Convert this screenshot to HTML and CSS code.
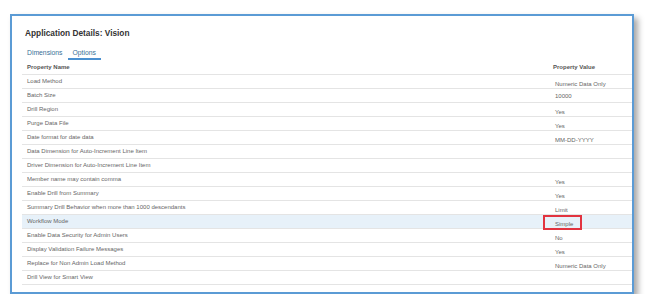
FILE: index.html
```html
<!doctype html>
<html lang="en">
<head>
	<meta charset="UTF-8">
	<title>Application Details: Vision</title>
	<link rel="stylesheet" href="styles.css">
</head>
<body>
	<div class="frame">
		<div class="content">
			<h1 class="title">Application Details: Vision</h1>
			<ul class="tabs">
				<li>Dimensions</li>
				<li class="on">Options</li>
			</ul>
			<div class="grid">
				<div class="row head"><span class="name">Property Name</span><span class="val">Property Value</span></div>
				<div class="row"><span class="name">Load Method</span><span class="val">Numeric Data Only</span></div>
				<div class="row"><span class="name">Batch Size</span><span class="val up">10000</span></div>
				<div class="row"><span class="name">Drill Region</span><span class="val">Yes</span></div>
				<div class="row"><span class="name">Purge Data File</span><span class="val">Yes</span></div>
				<div class="row"><span class="name">Date format for date data</span><span class="val">MM-DD-YYYY</span></div>
				<div class="row"><span class="name">Data Dimension for Auto-Increment Line Item</span><span class="val"></span></div>
				<div class="row"><span class="name">Driver Dimension for Auto-Increment Line Item</span><span class="val"></span></div>
				<div class="row"><span class="name">Member name may contain comma</span><span class="val">Yes</span></div>
				<div class="row"><span class="name">Enable Drill from Summary</span><span class="val">Yes</span></div>
				<div class="row"><span class="name">Summary Drill Behavior when more than 1000 descendants</span><span class="val">Limit</span></div>
				<div class="row sel"><span class="name">Workflow Mode</span><span class="val"><span class="mark"></span>Simple</span></div>
				<div class="row"><span class="name">Enable Data Security for Admin Users</span><span class="val">No</span></div>
				<div class="row"><span class="name">Display Validation Failure Messages</span><span class="val">Yes</span></div>
				<div class="row"><span class="name">Replace for Non Admin Load Method</span><span class="val">Numeric Data Only</span></div>
				<div class="row"><span class="name">Drill View for Smart View</span><span class="val"></span></div>
			</div>
		</div>
	</div>
</body>
</html>
```

FILE: styles.css
```css
*{padding: 0; margin: 0; list-style: none; box-sizing: border-box;}
body{
	background: #fff; font-family: "Liberation Sans", Arial, sans-serif;
	color: #666;
}
.frame{
	width: 624px; height: 280px; margin: 14px 0 0 10px;
	border: 2px solid #5b9bd5; background: #fff;
	box-shadow: 4px 4px 6px rgba(0,0,0,0.35);
	overflow: hidden;
}
.content{
	padding: 12px 0 0 10px;
}
.title{
	font-size: 8.3px; line-height: 10px; font-weight: bold; color: #333;
	margin-left: 3px;
}
.tabs{
	display: flex; margin-top: 8px;
}
.tabs li{
	font-size: 6.8px; line-height: 9px; color: #3a6f96;
	padding: 2px 5px 1px; border-bottom: 2px solid transparent;
}
.tabs li.on{
	border-bottom-color: #4a90d0;
}
.row{
	display: flex; height: 14px; border-bottom: 1px solid #e4e4e4;
	font-size: 6px; line-height: 13px;
}
.row .name{
	flex: 1; padding-left: 5px;
}
.row .val{
	width: 81px; padding: 3px 0 0 4px; position: relative;
}
.row .val.up{
	padding-top: 1px;
}
.row.head{
	height: 15px; line-height: 14px; font-weight: bold; color: #555;
}
.row.head .val{
	padding: 0 0 0 2px;
}
.row.sel{
	background: #e7f1f9;
}
.mark{
	position: absolute; left: -8px; top: 0; width: 39px; height: 15px;
	border: 2px solid #e2333f;
}
```
